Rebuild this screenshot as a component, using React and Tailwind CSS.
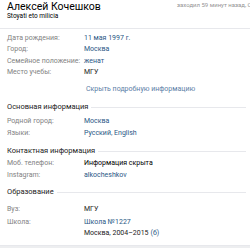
import React from 'react';

const Row = ({ label, children, h = 'h-[12px]' }) => (
  <div className={`flex items-center ${h}`}>
    <div className="w-[77px] shrink-0 text-[#828282]">{label}</div>
    <div className="whitespace-nowrap">{children}</div>
  </div>
);

const Section = ({ title, className = '' }) => (
  <div className={`flex items-center h-[12px] ${className}`}>
    <span className="text-[#222222] text-[7.5px] whitespace-nowrap">{title}</span>
    <div className="flex-1 h-px bg-[#e7e8ec] ml-[3px]"></div>
  </div>
);

const App = () => {
  return (
    <div className="w-[250px] h-[248px] overflow-hidden bg-[#edeef0]" style={{ fontFamily: 'Roboto, "Liberation Sans", sans-serif' }}>
      <div className="bg-white text-[7px] border-b border-[#e7e8ec]">
        {/* header */}
        <div className="h-[29px] border-b border-[#e7e8ec] flex pl-[7px]">
          <div className="w-[170px] shrink-0">
            <div className="text-[10.5px] leading-[12px] mt-[1px] text-[#000000] whitespace-nowrap">Алексей Кочешков</div>
            <div className="text-[6.5px] leading-[9px] mt-[-1px] text-[#000000] whitespace-nowrap">Stoyati eto milicia</div>
          </div>
          <div className="shrink-0 whitespace-nowrap text-[6px] leading-[10px] text-[#939393] -ml-[0px]">заходил 59 минут назад, Санкт-Петербург</div>
        </div>

        <div className="pl-[7px] pr-[4px] pb-[7px]">
          <div className="pt-[3px]">
            <Row label="Дата рождения:" h="h-[11.5px]"><span className="text-[#2a5885]">11 мая 1997 г.</span></Row>
            <Row label="Город:" h="h-[11.5px]"><span className="text-[#2a5885]">Москва</span></Row>
            <Row label="Семейное положение:" h="h-[11.5px]"><span className="text-[#2a5885]">женат</span></Row>
            <Row label="Место учебы:" h="h-[11.5px]"><span className="text-[#222222]">МГУ</span></Row>
          </div>

          <div className="mt-[5px] h-[12px] flex items-center">
            <span className="ml-[79px] text-[#5a7ea6] whitespace-nowrap">Скрыть подробную информацию</span>
          </div>

          <Section title="Основная информация" className="mt-[6px]" />
          <div className="mt-[2px]">
            <Row label="Родной город:"><span className="text-[#2a5885]">Москва</span></Row>
            <Row label="Языки:"><span className="text-[#2a5885]">Русский, English</span></Row>
          </div>

          <Section title="Контактная информация" className="mt-[6px]" />
          <div>
            <Row label="Моб. телефон:"><span className="text-[#000000]">Информация скрыта</span></Row>
            <Row label="Instagram:"><span className="text-[#2a5885]">alkocheshkov</span></Row>
          </div>

          <Section title="Образование" className="mt-[5px]" />
          <div className="mt-[5px]">
            <Row label="Вуз:"><span className="text-[#222222]">МГУ</span></Row>
            <div className="flex mt-[1px]">
              <div className="w-[77px] shrink-0 text-[#828282] h-[12px] flex items-center">Школа:</div>
              <div className="whitespace-nowrap">
                <div className="h-[12px] flex items-center text-[#2a5885]">Школа №1227</div>
                <div className="h-[10px] flex items-center text-[#222222]">Москва, 2004–2015 <span className="text-[#2a5885] ml-[2px]">(б)</span></div>
              </div>
            </div>
          </div>
        </div>
      </div>
    </div>
  );
};

export default App;
